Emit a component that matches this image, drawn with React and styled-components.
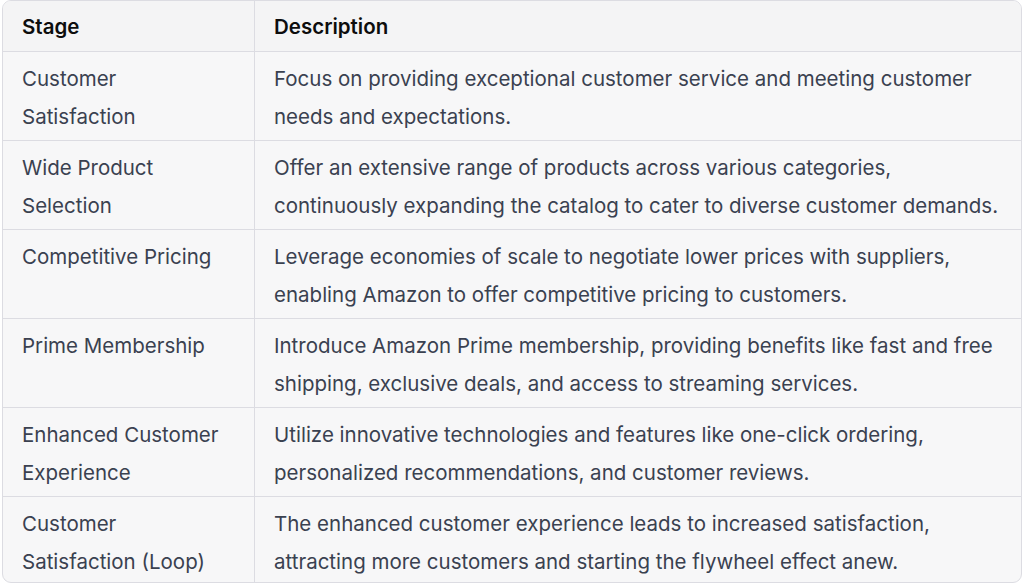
import React from "react";
import styled, { createGlobalStyle } from "styled-components";

const Global = createGlobalStyle`
  html, body { margin: 0; padding: 0; background: #ffffff; }
  body { font-family: Inter, "Noto Sans", sans-serif; }
`;

const Page = styled.div`
  padding: 0 2px 0 2px;
  width: 1024px;
  box-sizing: border-box;
`;

const Frame = styled.div`
  box-sizing: border-box;
  height: 583px;
  border: 1px solid #dcdce2;
  border-radius: 9px;
  overflow: hidden;
  background: #f7f7f8;
`;

const Table = styled.table`
  width: 100%;
  border-collapse: collapse;
  table-layout: fixed;
`;

const HeadCell = styled.th`
  text-align: left;
  font-weight: 600;
  font-size: 20.5px;
  line-height: 37.5px;
  color: #0d0d0d;
  background: #f4f4f5;
  padding: 6.5px 20px 6px 19px;
  border-bottom: 1px solid #dcdce2;
  width: ${(p) => p.$w || "auto"};
  & + & { border-left: 1px solid #dcdce2; }
`;

const Row = styled.tr`
  & + & td { border-top: 1px solid #dcdce2; }
`;

const Cell = styled.td`
  font-size: 20.5px;
  line-height: 37.5px;
  color: #3a4150;
  padding: 8px 20px 5.1px 19px;
  vertical-align: top;
  & + & { border-left: 1px solid #dcdce2; }
`;

const rows = [
  ["Customer Satisfaction", "Focus on providing exceptional customer service and meeting customer needs and expectations."],
  ["Wide Product Selection", "Offer an extensive range of products across various categories, continuously expanding the catalog to cater to diverse customer demands."],
  ["Competitive Pricing", "Leverage economies of scale to negotiate lower prices with suppliers, enabling Amazon to offer competitive pricing to customers."],
  ["Prime Membership", "Introduce Amazon Prime membership, providing benefits like fast and free shipping, exclusive deals, and access to streaming services."],
  ["Enhanced Customer Experience", "Utilize innovative technologies and features like one-click ordering, personalized recommendations, and customer reviews."],
  ["Customer Satisfaction (Loop)", "The enhanced customer experience leads to increased satisfaction, attracting more customers and starting the flywheel effect anew."],
];

export default function App() {
  return (
    <>
      <Global />
      <Page>
        <Frame>
          <Table>
            <thead>
              <tr>
                <HeadCell $w="212px">Stage</HeadCell>
                <HeadCell>Description</HeadCell>
              </tr>
            </thead>
            <tbody>
              {rows.map(([s, d]) => (
                <Row key={s}>
                  <Cell>{s}</Cell>
                  <Cell>{d}</Cell>
                </Row>
              ))}
            </tbody>
          </Table>
        </Frame>
      </Page>
    </>
  );
}
